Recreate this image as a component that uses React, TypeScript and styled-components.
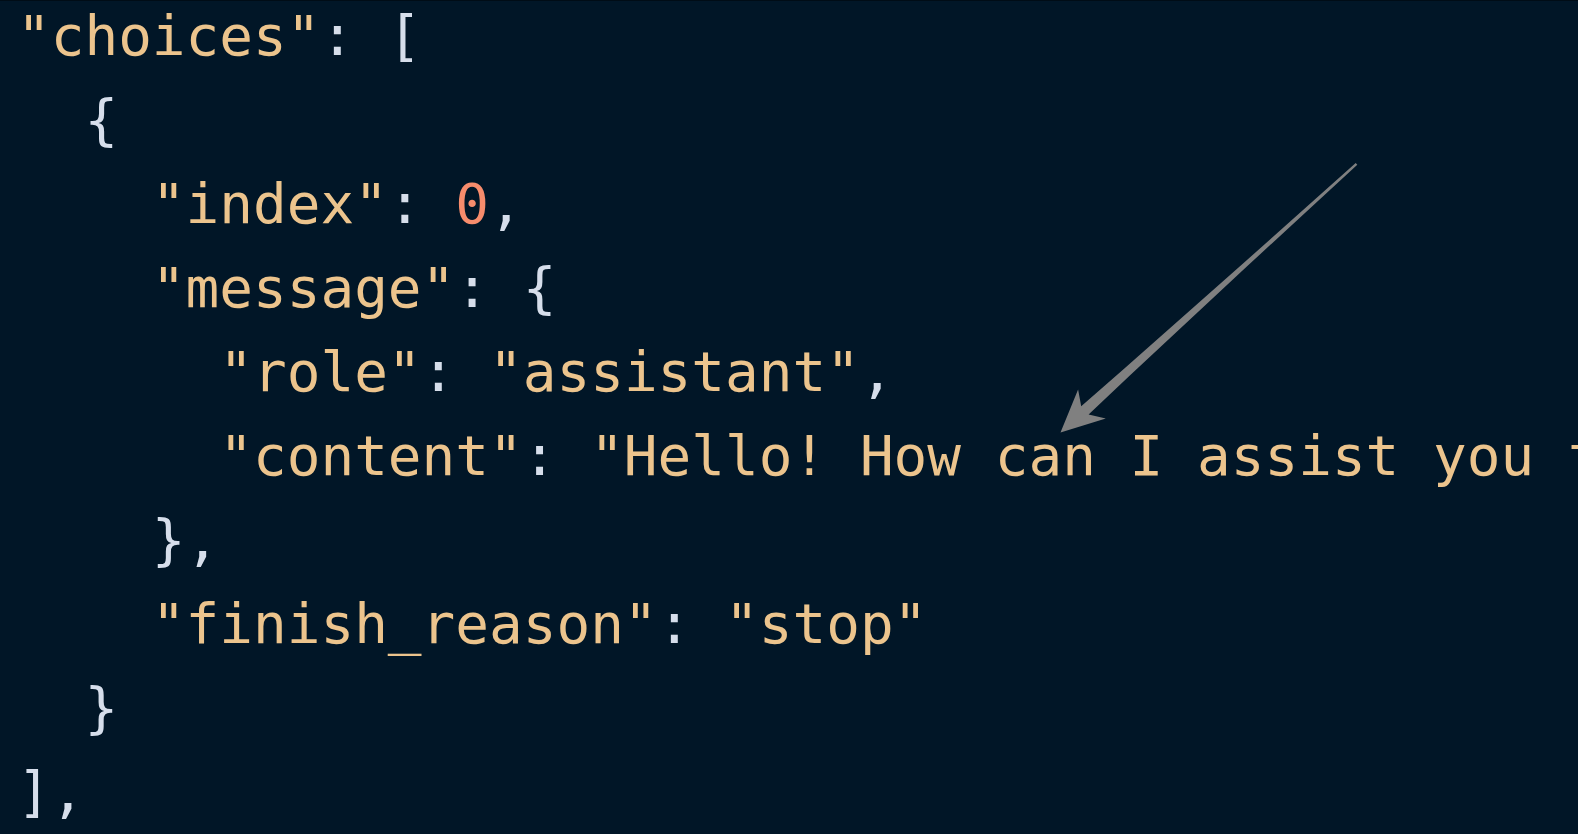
import React from "react";
import styled, { createGlobalStyle } from "styled-components";

const Global = createGlobalStyle`
  html, body {
    margin: 0;
    padding: 0;
    background: #011627;
  }
  #root { height: 100vh; }
`;

const Screen = styled.div`
  position: relative;
  width: 100vw;
  height: 100vh;
  overflow: hidden;
  background: #011627;
  border-top: 1px solid #000c16;
  box-sizing: border-box;
`;

const Code = styled.pre`
  margin: -7px 0 0 0;
  padding: 0 0 0 17px;
  font-family: "DejaVu Sans Mono", "Liberation Mono", monospace;
  font-size: 56px;
  line-height: 84px;
  color: #d6deeb;
  white-space: pre;
  font-variant-numeric: slashed-zero;
`;

const Line = styled.div<{ $indent: number }>`
  padding-left: ${(p) => p.$indent}ch;
  height: 84px;
`;

const Str = styled.span`
  color: #ecc48d;
`;

const Num = styled.span`
  color: #f78c6c;
`;

const Punct = styled.span`
  color: #d6deeb;
`;

const Overlay = styled.svg`
  position: absolute;
  left: 0;
  top: 0;
  width: 100%;
  height: 100%;
  pointer-events: none;
`;

type Tok = { k: "s" | "n" | "p"; t: string };
const s = (t: string): Tok => ({ k: "s", t });
const n = (t: string): Tok => ({ k: "n", t });
const p = (t: string): Tok => ({ k: "p", t });

const lines: { indent: number; toks: Tok[] }[] = [
  { indent: 0, toks: [s('"choices"'), p(": [")] },
  { indent: 2, toks: [p("{")] },
  { indent: 4, toks: [s('"index"'), p(": "), n("0"), p(",")] },
  { indent: 4, toks: [s('"message"'), p(": {")] },
  { indent: 6, toks: [s('"role"'), p(": "), s('"assistant"'), p(",")] },
  {
    indent: 6,
    toks: [s('"content"'), p(": "), s('"Hello! How can I assist you today?"')],
  },
  { indent: 4, toks: [p("},")] },
  { indent: 4, toks: [s('"finish_reason"'), p(": "), s('"stop"')] },
  { indent: 2, toks: [p("}")] },
  { indent: 0, toks: [p("],")] },
];

function Token({ tok }: { tok: Tok }) {
  if (tok.k === "s") return <Str>{tok.t}</Str>;
  if (tok.k === "n") return <Num>{tok.t}</Num>;
  return <Punct>{tok.t}</Punct>;
}

function arrowPoints(): string {
  const tail = { x: 1356.5, y: 163 };
  const tip = { x: 1060.5, y: 432 };
  const dx = tip.x - tail.x;
  const dy = tip.y - tail.y;
  const len = Math.hypot(dx, dy);
  const u = { x: dx / len, y: dy / len };
  const nrm = { x: -u.y, y: u.x };
  const pt = (back: number, w: number) =>
    `${(tip.x - back * u.x + w * nrm.x).toFixed(1)},${(
      tip.y -
      back * u.y +
      w * nrm.y
    ).toFixed(1)}`;
  return [
    pt(0, 0),
    pt(43, -20),
    pt(33, -5.5),
    pt(90, -4.4),
    pt(250, -2.4),
    pt(len, -1.2),
    pt(len, 1.2),
    pt(250, 2.4),
    pt(90, 4.4),
    pt(33, 5.5),
    pt(42, 20),
  ].join(" ");
}

export default function App() {
  return (
    <>
      <Global />
      <Screen>
        <Code>
          {lines.map((l, i) => (
            <Line key={i} $indent={l.indent}>
              {l.toks.map((t, j) => (
                <Token key={j} tok={t} />
              ))}
            </Line>
          ))}
        </Code>
        <Overlay viewBox="0 0 1578 834" preserveAspectRatio="none">
          <polygon points={arrowPoints()} fill="#808080" />
        </Overlay>
      </Screen>
    </>
  );
}
